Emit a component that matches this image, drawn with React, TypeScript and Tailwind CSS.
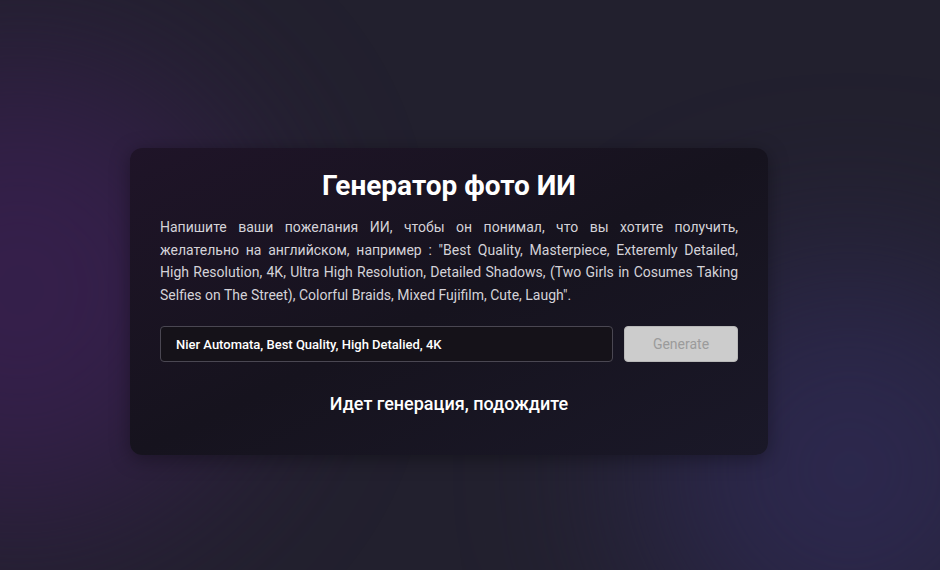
export default function App() {
  return (
    <div className="relative min-h-screen w-full overflow-hidden bg-[#22202e] pt-[148px] pl-[130px] font-[Roboto,'Noto_Sans',sans-serif] text-white">
      {/* soft glows behind the card */}
      <div className="pointer-events-none absolute -left-[210px] top-[60px] h-[460px] w-[460px] rounded-full bg-[#3a1f52] opacity-80 blur-[90px]" />
      <div className="pointer-events-none absolute -right-[120px] top-[260px] h-[420px] w-[420px] rounded-full bg-[#2f2a55] opacity-80 blur-[90px]" />

      <div className="relative z-10 w-[638px] rounded-xl bg-gradient-to-br from-[#1f1428] via-[#16131e] to-[#1a1828] px-[30px] pt-[20px] pb-[39px] shadow-[0_4px_20px_rgba(0,0,0,0.35)]">
        <h1 className="text-center text-[28px] font-bold leading-[36px] text-white">
          Генератор фото ИИ
        </h1>

        <p className="mt-[12px] text-justify text-[14px] leading-[22.5px] text-[#d4d2d8]">
          Напишите ваши пожелания ИИ, чтобы он понимал, что вы хотите получить,
          желательно на английском, например : "Best Quality, Masterpiece,
          Exteremly Detailed, High Resolution, 4K, Ultra High Resolution,
          Detailed Shadows, (Two Girls in Cosumes Taking Selfies on The Street),
          Colorful Braids, Mixed Fujifilm, Cute, Laugh".
        </p>

        <div className="mt-[20px] flex gap-[11px]">
          <input
            type="text"
            defaultValue="Nier Automata, Best Quality, High Detalied, 4K"
            className="h-[36px] flex-1 rounded-[4px] border border-[#4a4752] bg-[#151219] px-[15px] text-[13px] font-medium text-white outline-none"
          />
          <button
            disabled
            className="h-[36px] w-[114px] rounded-[4px] border border-[#b8b8b8] bg-[#cccccc] text-[14px] text-[#9b9b9b]"
          >
            Generate
          </button>
        </div>

        <div className="mt-[30px] text-center text-[18px] font-medium leading-[24px] text-white">
          Идет генерация, подождите
        </div>
      </div>
    </div>
  )
}
